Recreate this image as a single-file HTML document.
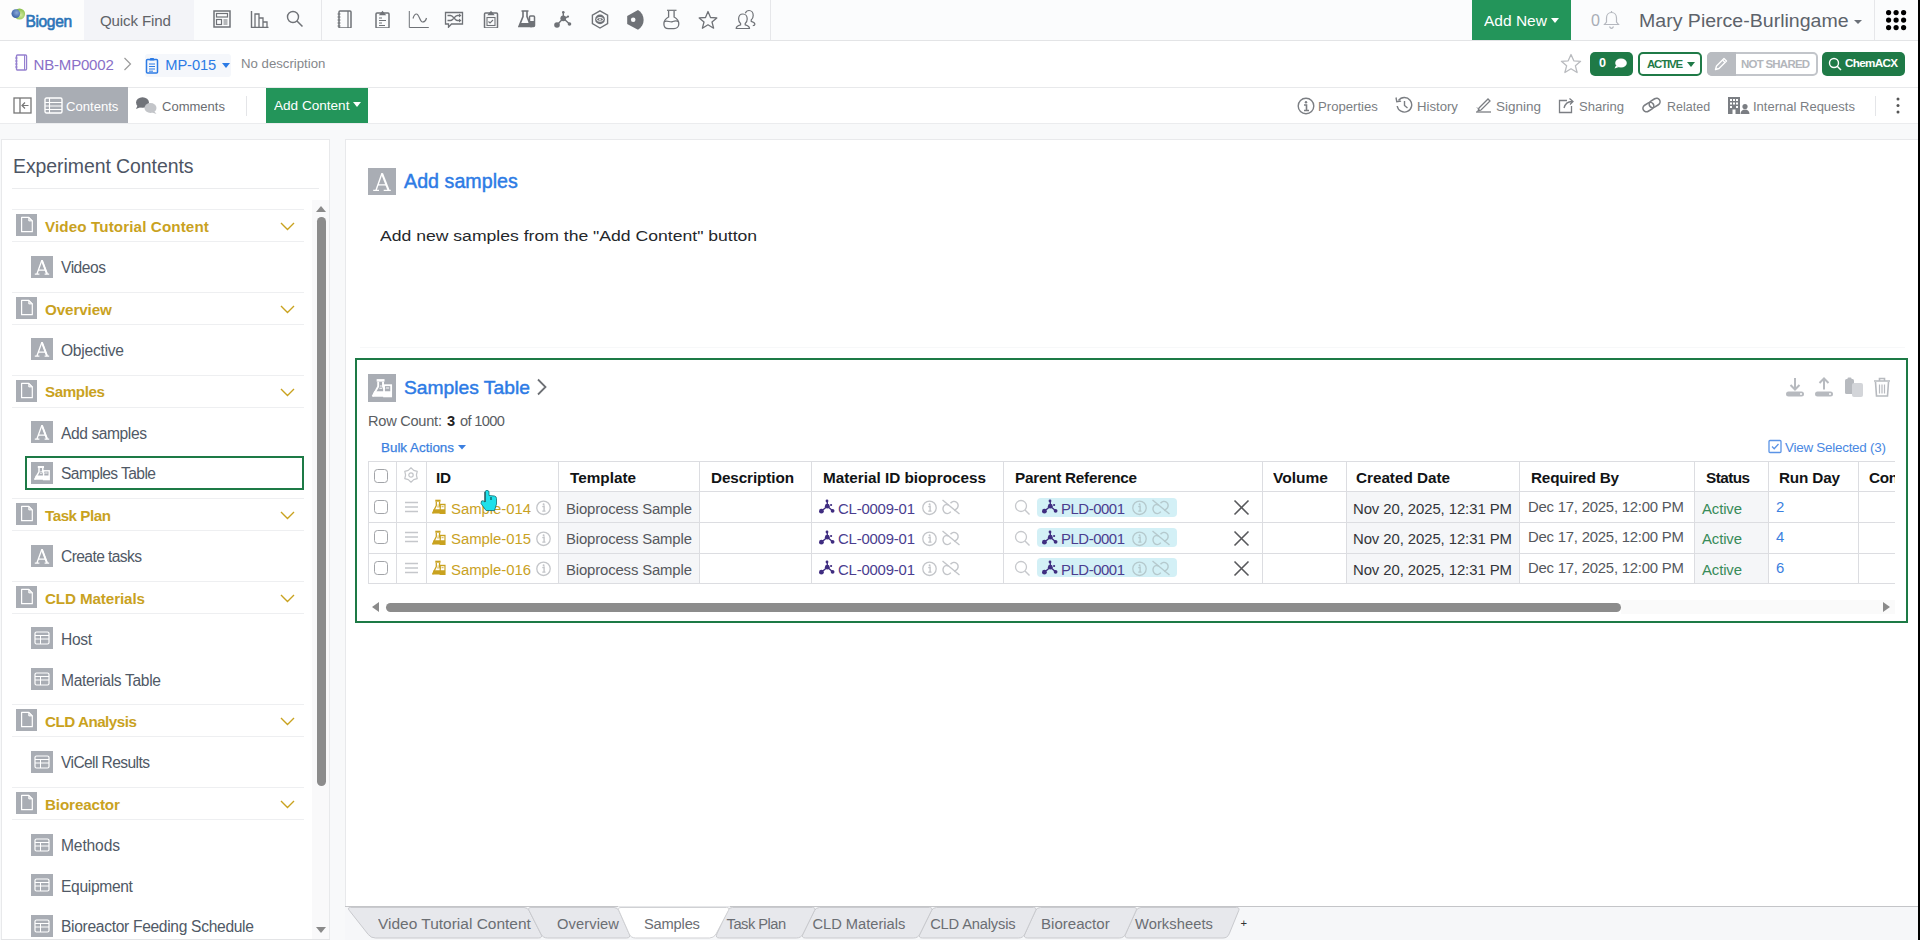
<!DOCTYPE html><html><head><meta charset="utf-8"><style>html,body{margin:0;padding:0;}body{width:1920px;height:940px;overflow:hidden;position:relative;background:#f8f9fa;font-family:"Liberation Sans",sans-serif;}</style></head><body><div style="position:absolute;left:0px;top:0px;width:1920px;height:40px;background:#fbfcfd;"></div>
<div style="position:absolute;left:0px;top:40px;width:1920px;height:1px;background:#e3e4e6;"></div>
<div style="position:absolute;left:84px;top:0px;width:110px;height:40px;background:#f3f4f8;"></div>
<div style="position:absolute;left:321px;top:0px;width:1px;height:40px;background:#e6e7ea;"></div>
<div style="position:absolute;left:770px;top:0px;width:1px;height:40px;background:#e6e7ea;"></div>
<div style="position:absolute;left:0px;top:41px;width:1920px;height:46px;background:#ffffff;"></div>
<div style="position:absolute;left:0px;top:87px;width:1920px;height:1px;background:#e8e9eb;"></div>
<div style="position:absolute;left:0px;top:88px;width:1920px;height:35px;background:#ffffff;"></div>
<div style="position:absolute;left:0px;top:123px;width:1920px;height:1px;background:#ebecee;"></div>
<div style="position:absolute;left:0px;top:124px;width:1920px;height:816px;background:#f8f9fa;"></div>
<div style="position:absolute;left:1918px;top:0px;width:2px;height:940px;background:#000;"></div>
<div style="position:absolute;left:0px;top:0px;width:84px;height:40px;background:#fdfdfd;"></div>
<svg style="position:absolute;left:10px;top:7px;" width="16" height="15" viewBox="0 0 16 15"><defs><radialGradient id="lgg" cx="0.6" cy="0.6" r="0.6"><stop offset="0" stop-color="#d2e8a0"/><stop offset="1" stop-color="#86bd45"/></radialGradient><radialGradient id="lgb" cx="0.6" cy="0.4" r="0.7"><stop offset="0" stop-color="#8aa8d8"/><stop offset="1" stop-color="#2f58a0"/></radialGradient></defs><circle cx="9.5" cy="7" r="5.6" fill="url(#lgg)"/><circle cx="5.8" cy="6.6" r="4.3" fill="url(#lgb)"/></svg>
<div style="position:absolute;left:25.50px;top:13.62px;font-family:'Liberation Sans', sans-serif;font-size:15.57px;line-height:15.57px;font-weight:400;color:#2a74b8;letter-spacing:-0.380px;white-space:nowrap;-webkit-text-stroke:0.6px #2a74b8;">Biogen</div>
<div style="position:absolute;left:100.00px;top:13.09px;font-family:'Liberation Sans', sans-serif;font-size:15.13px;line-height:15.13px;font-weight:400;color:#606368;letter-spacing:-0.156px;white-space:nowrap;">Quick Find</div>
<svg style="position:absolute;left:213px;top:10px;" width="18" height="18" viewBox="0 0 18 18"><rect x="1" y="1" width="16" height="16" fill="none" stroke="#6f7277" stroke-width="1.5"/><rect x="3.5" y="3.5" width="11" height="3.5" fill="none" stroke="#6f7277" stroke-width="1.2"/><rect x="3.5" y="9.5" width="5" height="5" fill="none" stroke="#6f7277" stroke-width="1.2"/><path d="M10.5 10h4M10.5 12h4M10.5 14h4" stroke="#6f7277" stroke-width="1"/></svg>
<svg style="position:absolute;left:250px;top:10px;" width="19" height="18" viewBox="0 0 19 18"><path d="M1.5 1v16.5h17" fill="none" stroke="#6f7277" stroke-width="1.4"/><path d="M5 17V4h4v13M9 17V8h4v9M13 17v-5h4v5" fill="none" stroke="#6f7277" stroke-width="1.3"/></svg>
<svg style="position:absolute;left:286px;top:10px;" width="18" height="18" viewBox="0 0 18 18"><circle cx="7" cy="7" r="5.5" fill="none" stroke="#6f7277" stroke-width="1.4"/><path d="M11 11l5.5 5.5" stroke="#6f7277" stroke-width="1.5"/></svg>
<svg style="position:absolute;left:336px;top:10px;" width="18" height="18" viewBox="0 0 18 18"><rect x="3" y="1" width="12" height="17" rx="1" fill="none" stroke="#6f7277" stroke-width="1.5"/><path d="M12 1v17" stroke="#6f7277" stroke-width="1.2"/><path d="M1.5 4h3M1.5 7h3M1.5 10h3M1.5 13h3M1.5 16h3" stroke="#6f7277" stroke-width="1"/></svg>
<svg style="position:absolute;left:374px;top:10px;" width="17" height="18" viewBox="0 0 17 18"><rect x="2" y="3" width="13" height="15" rx="1" fill="none" stroke="#6f7277" stroke-width="1.5"/><path d="M4.8 5.2h7.4L8.5 .8z" fill="#6f7277"/><path d="M5 8h3M5 10.5h7M5 13h3M5 15.5h6" stroke="#6f7277" stroke-width="1.1"/></svg>
<svg style="position:absolute;left:408px;top:10px;" width="21" height="18" viewBox="0 0 21 18"><path d="M1.3 1v16.5h19.5" fill="none" stroke="#6f7277" stroke-width="1"/><path d="M5 8.5C6 5 7.5 4 8.5 4C11 4 12 12 14.5 12C16.5 12 18 10 18.5 8" fill="none" stroke="#6f7277" stroke-width="1.2"/></svg>
<svg style="position:absolute;left:444px;top:10px;" width="20" height="18" viewBox="0 0 20 18"><path d="M1.5 2.5h17v11.5h-11l-3 3.2v-3.2h-3z" fill="none" stroke="#6f7277" stroke-width="1.3"/><path d="M3.5 5.5h3c3 0 4 5 7 5h2.5M3.5 10.5h3c3 0 4-5 7-5h2.5" fill="none" stroke="#6f7277" stroke-width="1.3"/><path d="M15 3.5l2.5 2-2.5 2M15 8.5l2.5 2-2.5 2" fill="#6f7277"/></svg>
<svg style="position:absolute;left:483px;top:10px;" width="16" height="18" viewBox="0 0 16 18"><rect x="1.5" y="3" width="13" height="15" rx="1" fill="none" stroke="#6f7277" stroke-width="1.5"/><path d="M4.3 5.2h7.4L8 .8z" fill="#6f7277"/><rect x="4" y="7.5" width="8" height="8" fill="none" stroke="#6f7277" stroke-width="1.1"/><path d="M5.5 11.5l1.5 1.5 3-3" fill="none" stroke="#6f7277" stroke-width="1.1"/></svg>
<svg style="position:absolute;left:518px;top:10px;" width="18" height="18" viewBox="0 0 18 18"><path d="M3.5 1h7M5 1.5v5L1 16.5h12l-4-10v-5" fill="none" stroke="#6f7277" stroke-width="1.6"/><path d="M2.5 13h10l1.5 3.5h-13z" fill="#6f7277"/><rect x="11.5" y="6" width="5" height="10.5" rx="1" fill="none" stroke="#6f7277" stroke-width="1.5"/><rect x="11.5" y="11" width="5" height="5.5" fill="#6f7277"/></svg>
<svg style="position:absolute;left:554px;top:10px;" width="18" height="18" viewBox="0 0 18 18"><path d="M3 15L9.3 8.3 15.5 14M9.3 8.3V2.2M9.3 8.3l4.3-1.5" stroke="#6f7277" stroke-width="1.4" fill="none"/><circle cx="9.3" cy="8.3" r="2.9" fill="#6f7277"/><circle cx="3" cy="15" r="2.8" fill="#6f7277"/><circle cx="15.5" cy="14" r="1.8" fill="#6f7277"/><circle cx="9.3" cy="2.2" r="1.3" fill="#6f7277"/><circle cx="14" cy="6.6" r="1.1" fill="#6f7277"/></svg>
<svg style="position:absolute;left:591px;top:10px;" width="18" height="19" viewBox="0 0 18 19"><path d="M9 .8l7.6 4.3v8.6L9 18 1.4 13.7V5.1z" fill="none" stroke="#6f7277" stroke-width="1.4"/><circle cx="9" cy="9.4" r="4.9" fill="#6f7277"/><ellipse cx="9" cy="9.4" rx="3.3" ry="1.9" fill="none" stroke="#fafbfc" stroke-width="1"/><circle cx="9" cy="9.4" r=".9" fill="#fbfcfd"/></svg>
<svg style="position:absolute;left:626px;top:9px;" width="19" height="22" viewBox="0 0 19 22"><path d="M12 1L1.2 7V15L12 20.8A11.5 11.5 0 0 0 12 1Z" fill="#6f7277"/><circle cx="7.2" cy="10.8" r="2.3" fill="#fbfcfd"/></svg>
<svg style="position:absolute;left:663px;top:9px;" width="17" height="21" viewBox="0 0 17 21"><path d="M4 1.3H13.5" stroke="#6f7277" stroke-width="1.2"/><path d="M5.6 2V8C2.3 9.6 .9 12.3 .9 15C.9 17.8 2.9 19.6 5.5 19.6H11C13.6 19.6 15.8 17.8 15.8 15C15.8 12.3 14.4 9.6 11.1 8V2" fill="none" stroke="#6f7277" stroke-width="1.3"/><path d="M1.1 12.8C4 10.9 7 13.6 9.6 12.6S13.6 11 15.6 12.8" fill="none" stroke="#6f7277" stroke-width="1.2"/></svg>
<svg style="position:absolute;left:698px;top:10px;" width="20" height="20" viewBox="0 0 20 20"><path d="M10 1.5l2.5 6 6.3.4-4.8 4.1 1.6 6.2L10 14.8l-5.6 3.4L6 12 1.2 7.9l6.3-.4z" fill="none" stroke="#6f7277" stroke-width="1.3" stroke-linejoin="round"/></svg>
<svg style="position:absolute;left:735px;top:9px;" width="21" height="21" viewBox="0 0 21 21"><path d="M8 5C5.3 5 3.6 7.2 3.6 10C3.6 12 4.4 13.6 5.6 14.5V15.8C3.2 16.4 1.2 17.3 1.2 19.5H14.5C14.5 17.3 12.5 16.4 10.2 15.8V14.5C11.4 13.6 12.2 12 12.2 10C12.2 7.2 10.5 5 8 5Z" fill="none" stroke="#6f7277" stroke-width="1.2"/><path d="M10.3 4.2C11 2.5 12.3 1.5 14 1.5C16.5 1.5 18.2 3.7 18.2 6.5C18.2 8.5 17.4 10.1 16.2 11V12.3C18.3 12.9 19.9 13.7 19.9 15.3C19.9 16.3 19.2 16.6 17.8 16.6" fill="none" stroke="#6f7277" stroke-width="1.2"/></svg>
<div style="position:absolute;left:1472px;top:0px;width:99px;height:40px;background:#23955a;"></div>
<div style="position:absolute;left:1484.00px;top:13.02px;font-family:'Liberation Sans', sans-serif;font-size:15.21px;line-height:15.21px;font-weight:400;color:#ffffff;letter-spacing:0.000px;white-space:nowrap;transform:scaleX(1.0202);transform-origin:0 0;">Add New</div>
<svg style="position:absolute;left:1551px;top:18px;" width="8" height="5" viewBox="0 0 8 5"><path d="M0 0h8L4 5z" fill="#fff"/></svg>
<div style="position:absolute;left:1591.00px;top:11.97px;font-family:'Liberation Sans', sans-serif;font-size:16.11px;line-height:16.11px;font-weight:400;color:#a9adb6;letter-spacing:0.000px;white-space:nowrap;">0</div>
<svg style="position:absolute;left:1603px;top:10px;" width="17" height="19" viewBox="0 0 17 19"><path d="M8.5 2.5c3 0 5 2.3 5 5.5v4l2 2.5H1.5l2-2.5v-4c0-3.2 2-5.5 5-5.5z" fill="none" stroke="#b5b8bf" stroke-width="1.2"/><path d="M6.5 16.5c.5 1.2 1.2 1.8 2 1.8s1.5-.6 2-1.8" fill="none" stroke="#b5b8bf" stroke-width="1.2"/><path d="M8.5 1v1.5" stroke="#b5b8bf" stroke-width="1.2"/></svg>
<div style="position:absolute;left:1639.00px;top:12.25px;font-family:'Liberation Sans', sans-serif;font-size:18.13px;line-height:18.13px;font-weight:400;color:#5d636b;letter-spacing:0.000px;white-space:nowrap;transform:scaleX(1.0789);transform-origin:0 0;">Mary Pierce-Burlingame</div>
<svg style="position:absolute;left:1854px;top:20px;" width="8" height="4" viewBox="0 0 8 4"><path d="M0 0h8L4 4z" fill="#6b7078"/></svg>
<div style="position:absolute;left:1874px;top:0px;width:1px;height:40px;background:#e6e7ea;"></div>
<svg style="position:absolute;left:1886px;top:10px;" width="21" height="21" viewBox="0 0 21 21"><circle cx="2.6" cy="2.6" r="2.6" fill="#000"/><circle cx="10.1" cy="2.6" r="2.6" fill="#000"/><circle cx="17.6" cy="2.6" r="2.6" fill="#000"/><circle cx="2.6" cy="10.1" r="2.6" fill="#000"/><circle cx="10.1" cy="10.1" r="2.6" fill="#000"/><circle cx="17.6" cy="10.1" r="2.6" fill="#000"/><circle cx="2.6" cy="17.6" r="2.6" fill="#000"/><circle cx="10.1" cy="17.6" r="2.6" fill="#000"/><circle cx="17.6" cy="17.6" r="2.6" fill="#000"/></svg>
<svg style="position:absolute;left:14px;top:54px;" width="14" height="17" viewBox="0 0 14 17"><rect x="2.5" y="1" width="10" height="15" rx="1" fill="none" stroke="#9580cf" stroke-width="1.4"/><path d="M1 4h2.5M1 7h2.5M1 10h2.5M1 13h2.5" stroke="#9580cf" stroke-width="1"/><path d="M10.5 1v15" stroke="#9580cf" stroke-width="1"/></svg>
<div style="position:absolute;left:33.60px;top:57.15px;font-family:'Liberation Sans', sans-serif;font-size:15.06px;line-height:15.06px;font-weight:400;color:#8a70c8;letter-spacing:-0.225px;white-space:nowrap;">NB-MP0002</div>
<svg style="position:absolute;left:123px;top:57px;" width="9" height="14" viewBox="0 0 9 14"><path d="M1.5 1l6 6-6 6" fill="none" stroke="#9b9b9b" stroke-width="1.2"/></svg>
<div style="position:absolute;left:145px;top:54px;width:86px;height:23px;background:#f5f7fb;border-radius:3px;"></div>
<svg style="position:absolute;left:145px;top:57px;" width="14" height="17" viewBox="0 0 14 17"><rect x="1.5" y="2.5" width="11" height="13.5" rx="1" fill="none" stroke="#2c7be5" stroke-width="1.5"/><path d="M4.5 3.5h5l-.8-2.5h-3.4z" fill="#2c7be5"/><path d="M4 7h6M4 9.5h6M4 12h6M4 14.2h4" stroke="#2c7be5" stroke-width="1"/></svg>
<div style="position:absolute;left:165.30px;top:58.37px;font-family:'Liberation Sans', sans-serif;font-size:14.69px;line-height:14.69px;font-weight:400;color:#2c7be5;letter-spacing:-0.110px;white-space:nowrap;">MP-015</div>
<svg style="position:absolute;left:222px;top:63px;" width="8" height="5" viewBox="0 0 8 5"><path d="M0 0h8L4 5z" fill="#2c7be5"/></svg>
<div style="position:absolute;left:241.40px;top:58.41px;font-family:'Liberation Sans', sans-serif;font-size:12.28px;line-height:12.28px;font-weight:400;color:#85878b;letter-spacing:0.000px;white-space:nowrap;transform:scaleX(1.0763);transform-origin:0 0;">No description</div>
<svg style="position:absolute;left:1560px;top:53px;" width="22" height="21" viewBox="0 0 22 21"><path d="M11 1.5l2.8 6.3 6.8.5-5.2 4.5 1.7 6.7L11 15.8l-6.1 3.7 1.7-6.7L1.4 8.3l6.8-.5z" fill="none" stroke="#b9bbbf" stroke-width="1.3" stroke-linejoin="round"/></svg>
<div style="position:absolute;left:1590px;top:52px;width:43px;height:24px;background:#1f7a47;border-radius:5px;"></div>
<div style="position:absolute;left:1599.00px;top:56.83px;font-family:'Liberation Sans', sans-serif;font-size:12.61px;line-height:12.61px;font-weight:700;color:#fff;letter-spacing:0.000px;white-space:nowrap;">0</div>
<svg style="position:absolute;left:1614px;top:58px;" width="13" height="11" viewBox="0 0 13 11"><ellipse cx="7" cy="5" rx="5.8" ry="4.6" fill="#fff"/><path d="M2 7.5L.5 10.5 5 9z" fill="#fff"/></svg>
<div style="position:absolute;left:1638px;top:52px;width:64px;height:24px;background:#fff;border:2px solid #1f7a47;border-radius:5px;box-sizing:border-box;"></div>
<div style="position:absolute;left:1647.00px;top:58.84px;font-family:'Liberation Sans', sans-serif;font-size:11.41px;line-height:11.41px;font-weight:700;color:#1f7a47;letter-spacing:-1.160px;white-space:nowrap;">ACTIVE</div>
<svg style="position:absolute;left:1687px;top:62px;" width="8" height="5" viewBox="0 0 8 5"><path d="M0 0h8L4 5z" fill="#1f7a47"/></svg>
<div style="position:absolute;left:1707px;top:52px;width:111px;height:24px;background:#fff;border:2px solid #c2c5ca;border-radius:5px;box-sizing:border-box;"></div>
<div style="position:absolute;left:1707px;top:52px;width:29px;height:24px;background:#b9bcc1;border-radius:5px 0 0 5px;"></div>
<svg style="position:absolute;left:1713px;top:57px;" width="16" height="15" viewBox="0 0 16 15"><path d="M2.5 12.5l1-3.5L11 1.5l2.5 2.5L6 11.5z" fill="none" stroke="#fff" stroke-width="1.4" stroke-linejoin="round"/><path d="M9.5 3l2.5 2.5" stroke="#fff" stroke-width="1.2"/></svg>
<div style="position:absolute;left:1741.00px;top:58.79px;font-family:'Liberation Sans', sans-serif;font-size:11.47px;line-height:11.47px;font-weight:700;color:#b3b6bb;letter-spacing:-0.744px;white-space:nowrap;">NOT SHARED</div>
<div style="position:absolute;left:1822px;top:52px;width:83px;height:24px;background:#1f7a47;border-radius:5px;"></div>
<svg style="position:absolute;left:1828px;top:57px;" width="14" height="14" viewBox="0 0 14 14"><circle cx="6" cy="6" r="4.5" fill="none" stroke="#fff" stroke-width="1.4"/><path d="M9.2 9.2l3.8 3.8" stroke="#fff" stroke-width="1.5"/></svg>
<div style="position:absolute;left:1845.00px;top:57.10px;font-family:'Liberation Sans', sans-serif;font-size:11.69px;line-height:11.69px;font-weight:700;color:#fff;letter-spacing:-0.700px;white-space:nowrap;">ChemACX</div>
<svg style="position:absolute;left:13px;top:97px;" width="19" height="17" viewBox="0 0 19 17"><rect x="1" y="1" width="17" height="15" fill="none" stroke="#777" stroke-width="1.3"/><path d="M7 1v15" stroke="#777" stroke-width="1.3"/><path d="M15.5 8.5h-6M12 5.5l-3 3 3 3" fill="none" stroke="#777" stroke-width="1.2"/></svg>
<div style="position:absolute;left:36px;top:87px;width:92px;height:36px;background:#a9adb4;"></div>
<svg style="position:absolute;left:44px;top:97px;" width="19" height="17" viewBox="0 0 19 17"><rect x="1" y="1" width="17" height="15" rx="1.5" fill="none" stroke="#fff" stroke-width="1.4"/><path d="M1 5.5h17M1 9h17M1 12.5h17M5.5 1v15" stroke="#fff" stroke-width="1.1"/></svg>
<div style="position:absolute;left:66.00px;top:100.82px;font-family:'Liberation Sans', sans-serif;font-size:12.73px;line-height:12.73px;font-weight:400;color:#ffffff;letter-spacing:0.000px;white-space:nowrap;transform:scaleX(1.0284);transform-origin:0 0;">Contents</div>
<svg style="position:absolute;left:135px;top:96px;" width="23" height="19" viewBox="0 0 23 19"><ellipse cx="7.5" cy="6.5" rx="6.5" ry="5.3" fill="#707379"/><path d="M2.5 9.5L1 13l5-2z" fill="#707379"/><ellipse cx="15.5" cy="12" rx="6" ry="5" fill="#c3c5c9"/><path d="M19 15l2.5 3-4.5-1.5z" fill="#c3c5c9"/></svg>
<div style="position:absolute;left:162.00px;top:100.81px;font-family:'Liberation Sans', sans-serif;font-size:12.50px;line-height:12.50px;font-weight:400;color:#6a6d72;letter-spacing:0.000px;white-space:nowrap;transform:scaleX(1.0422);transform-origin:0 0;">Comments</div>
<div style="position:absolute;left:246px;top:96px;width:1px;height:20px;background:#e4e5e8;"></div>
<div style="position:absolute;left:266px;top:88px;width:102px;height:35px;background:#23955a;"></div>
<div style="position:absolute;left:274.20px;top:99.84px;font-family:'Liberation Sans', sans-serif;font-size:12.95px;line-height:12.95px;font-weight:400;color:#ffffff;letter-spacing:0.000px;white-space:nowrap;transform:scaleX(1.0486);transform-origin:0 0;">Add Content</div>
<svg style="position:absolute;left:353px;top:102px;" width="8" height="5" viewBox="0 0 8 5"><path d="M0 0h8L4 5z" fill="#fff"/></svg>
<svg style="position:absolute;left:1297px;top:97px;" width="18" height="18" viewBox="0 0 18 18"><circle cx="9" cy="9" r="7.8" fill="none" stroke="#7b7e83" stroke-width="1.4"/><circle cx="9" cy="5.2" r="1.2" fill="#7b7e83"/><path d="M7 8h2.5v5.5M7 13.5h5" fill="none" stroke="#7b7e83" stroke-width="1.6"/></svg>
<div style="position:absolute;left:1318.00px;top:100.60px;font-family:'Liberation Sans', sans-serif;font-size:12.64px;line-height:12.64px;font-weight:400;color:#7b7e83;letter-spacing:0.000px;white-space:nowrap;transform:scaleX(1.0408);transform-origin:0 0;">Properties</div>
<svg style="position:absolute;left:1395px;top:96px;" width="18" height="18" viewBox="0 0 18 18"><path d="M3.5 4.5A7.3 7.3 0 1 1 2.2 10" fill="none" stroke="#7b7e83" stroke-width="1.4"/><path d="M1 1.5l.8 4.3 4.3-.7" fill="none" stroke="#7b7e83" stroke-width="1.4"/><path d="M9.5 5v4.5l3 2.5" fill="none" stroke="#7b7e83" stroke-width="1.4"/></svg>
<div style="position:absolute;left:1417.00px;top:100.60px;font-family:'Liberation Sans', sans-serif;font-size:12.64px;line-height:12.64px;font-weight:400;color:#7b7e83;letter-spacing:0.000px;white-space:nowrap;transform:scaleX(1.0419);transform-origin:0 0;">History</div>
<svg style="position:absolute;left:1475px;top:97px;" width="17" height="16" viewBox="0 0 17 16"><path d="M4 11L13 2l2 2-9 9-3 1z" fill="none" stroke="#7b7e83" stroke-width="1.3"/><path d="M1 15h15" stroke="#7b7e83" stroke-width="1.3"/><path d="M2 10.5l3 3" stroke="#7b7e83" stroke-width="1"/></svg>
<div style="position:absolute;left:1496.00px;top:100.54px;font-family:'Liberation Sans', sans-serif;font-size:12.71px;line-height:12.71px;font-weight:400;color:#7b7e83;letter-spacing:0.000px;white-space:nowrap;transform:scaleX(1.0626);transform-origin:0 0;">Signing</div>
<svg style="position:absolute;left:1558px;top:97px;" width="17" height="17" viewBox="0 0 17 17"><path d="M9 3.5H1.5v12h12V9" fill="none" stroke="#7b7e83" stroke-width="1.3"/><path d="M6 11c1-4 4-6.5 8-6.5M11.5 1.5l3.5 3-3 3" fill="none" stroke="#7b7e83" stroke-width="1.3"/></svg>
<div style="position:absolute;left:1579.00px;top:100.62px;font-family:'Liberation Sans', sans-serif;font-size:12.61px;line-height:12.61px;font-weight:400;color:#7b7e83;letter-spacing:0.000px;white-space:nowrap;transform:scaleX(1.0357);transform-origin:0 0;">Sharing</div>
<svg style="position:absolute;left:1641px;top:97px;" width="21" height="16" viewBox="0 0 21 16"><g transform="rotate(-32 10.5 8)" fill="none" stroke="#7b7e83" stroke-width="1.6"><rect x="1" y="4.6" width="11.5" height="7" rx="3.5"/><rect x="8.5" y="4.4" width="11.5" height="7" rx="3.5"/></g></svg>
<div style="position:absolute;left:1667.00px;top:100.74px;font-family:'Liberation Sans', sans-serif;font-size:12.47px;line-height:12.47px;font-weight:400;color:#7b7e83;letter-spacing:0.017px;white-space:nowrap;">Related</div>
<svg style="position:absolute;left:1728px;top:97px;" width="22" height="17" viewBox="0 0 22 17"><path d="M0 0h12v17H0z" fill="#7b7e83"/><g fill="#fff"><rect x="2" y="2" width="2" height="2"/><rect x="5" y="2" width="2" height="2"/><rect x="8" y="2" width="2" height="2"/><rect x="2" y="5.5" width="2" height="2"/><rect x="5" y="5.5" width="2" height="2"/><rect x="8" y="5.5" width="2" height="2"/><rect x="2" y="9" width="2" height="2"/><rect x="8" y="9" width="2" height="2"/></g><rect x="4.5" y="12.5" width="3" height="4.5" fill="#fff"/><circle cx="17" cy="9.5" r="2.6" fill="#7b7e83"/><path d="M12.5 17c0-3 2-4.5 4.5-4.5s4.5 1.5 4.5 4.5z" fill="#7b7e83"/></svg>
<div style="position:absolute;left:1753.00px;top:100.63px;font-family:'Liberation Sans', sans-serif;font-size:12.60px;line-height:12.60px;font-weight:400;color:#7b7e83;letter-spacing:0.000px;white-space:nowrap;transform:scaleX(1.0329);transform-origin:0 0;">Internal Requests</div>
<div style="position:absolute;left:1875px;top:96px;width:1px;height:20px;background:#e4e5e8;"></div>
<svg style="position:absolute;left:1896px;top:97px;" width="4" height="17" viewBox="0 0 4 17"><circle cx="2" cy="2" r="1.5" fill="#555"/><circle cx="2" cy="8.5" r="1.5" fill="#555"/><circle cx="2" cy="15" r="1.5" fill="#555"/></svg>
<div style="position:absolute;left:1px;top:139px;width:329px;height:801px;background:#ffffff;border:1px solid #e8e9eb;border-bottom:none;box-sizing:border-box;"></div>
<div style="position:absolute;left:13.00px;top:156.92px;font-family:'Liberation Sans', sans-serif;font-size:19.47px;line-height:19.47px;font-weight:400;color:#4d5564;letter-spacing:-0.061px;white-space:nowrap;">Experiment Contents</div>
<div style="position:absolute;left:12px;top:188px;width:307px;height:1px;background:#ebecee;"></div>
<div style="position:absolute;left:312px;top:200px;width:17px;height:740px;background:#f9f9fa;"></div>
<svg style="position:absolute;left:316px;top:206px;" width="10" height="6" viewBox="0 0 10 6"><path d="M0 6L5 0l5 6z" fill="#8a8a8a"/></svg>
<div style="position:absolute;left:317px;top:217px;width:9px;height:569px;background:#8c8c8c;border-radius:5px;"></div>
<svg style="position:absolute;left:316px;top:927px;" width="10" height="6" viewBox="0 0 10 6"><path d="M0 0h10L5 6z" fill="#8a8a8a"/></svg>
<div style="position:absolute;left:0;top:0;width:312px;height:939px;overflow:hidden;">
<div style="position:absolute;left:12px;top:209px;width:292px;height:1px;background:#eeeff1;"></div>
<div style="position:absolute;left:16px;top:214px;width:21px;height:22px;background:#a9adb4;"></div>
<svg style="position:absolute;left:16px;top:214px;" width="21" height="22" viewBox="0 0 21 22"><path d="M5.6 3.4h7.2l3.5 3.5v10.8H5.6z" fill="none" stroke="#fff" stroke-width="1.2" stroke-linejoin="round"/><path d="M12.8 3.4v3.5h3.5z" fill="#fff" fill-opacity=".5" stroke="#fff" stroke-width="1"/></svg>
<div style="position:absolute;left:45.00px;top:218.73px;font-family:'Liberation Sans', sans-serif;font-size:15.20px;line-height:15.20px;font-weight:700;color:#c9a21f;letter-spacing:0.117px;white-space:nowrap;">Video Tutorial Content</div>
<svg style="position:absolute;left:280px;top:222px;" width="15" height="9" viewBox="0 0 15 9"><path d="M1 1l6.5 6.5L14 1" fill="none" stroke="#c9a21f" stroke-width="1.4"/></svg>
<div style="position:absolute;left:12px;top:241px;width:292px;height:1px;background:#eeeff1;"></div>
<div style="position:absolute;left:31px;top:256px;width:22px;height:22px;background:#a9adb4;"></div>
<svg style="position:absolute;left:31px;top:256px;" width="22" height="22" viewBox="0 0 22 22"><path d="M6 17.8L10.9 4.3M10.9 4.3L16 17.8M7.6 14.2h6.8M3.8 18.1h4.6M13.6 18.1h4.6" fill="none" stroke="#fff" stroke-width="1.3"/><path d="M10.9 4.3L16 17.8" stroke="#fff" stroke-width="1.9"/></svg>
<div style="position:absolute;left:61.00px;top:260.22px;font-family:'Liberation Sans', sans-serif;font-size:15.60px;line-height:15.60px;font-weight:400;color:#505966;letter-spacing:-0.480px;white-space:nowrap;">Videos</div>
<div style="position:absolute;left:12px;top:292px;width:292px;height:1px;background:#eeeff1;"></div>
<div style="position:absolute;left:16px;top:297px;width:21px;height:22px;background:#a9adb4;"></div>
<svg style="position:absolute;left:16px;top:297px;" width="21" height="22" viewBox="0 0 21 22"><path d="M5.6 3.4h7.2l3.5 3.5v10.8H5.6z" fill="none" stroke="#fff" stroke-width="1.2" stroke-linejoin="round"/><path d="M12.8 3.4v3.5h3.5z" fill="#fff" fill-opacity=".5" stroke="#fff" stroke-width="1"/></svg>
<div style="position:absolute;left:45.00px;top:301.58px;font-family:'Liberation Sans', sans-serif;font-size:15.20px;line-height:15.20px;font-weight:700;color:#c9a21f;letter-spacing:-0.100px;white-space:nowrap;">Overview</div>
<svg style="position:absolute;left:280px;top:305px;" width="15" height="9" viewBox="0 0 15 9"><path d="M1 1l6.5 6.5L14 1" fill="none" stroke="#c9a21f" stroke-width="1.4"/></svg>
<div style="position:absolute;left:12px;top:324px;width:292px;height:1px;background:#eeeff1;"></div>
<div style="position:absolute;left:31px;top:338px;width:22px;height:22px;background:#a9adb4;"></div>
<svg style="position:absolute;left:31px;top:338px;" width="22" height="22" viewBox="0 0 22 22"><path d="M6 17.8L10.9 4.3M10.9 4.3L16 17.8M7.6 14.2h6.8M3.8 18.1h4.6M13.6 18.1h4.6" fill="none" stroke="#fff" stroke-width="1.3"/><path d="M10.9 4.3L16 17.8" stroke="#fff" stroke-width="1.9"/></svg>
<div style="position:absolute;left:61.00px;top:343.07px;font-family:'Liberation Sans', sans-serif;font-size:15.60px;line-height:15.60px;font-weight:400;color:#505966;letter-spacing:-0.256px;white-space:nowrap;">Objective</div>
<div style="position:absolute;left:12px;top:375px;width:292px;height:1px;background:#eeeff1;"></div>
<div style="position:absolute;left:16px;top:380px;width:21px;height:22px;background:#a9adb4;"></div>
<svg style="position:absolute;left:16px;top:380px;" width="21" height="22" viewBox="0 0 21 22"><path d="M5.6 3.4h7.2l3.5 3.5v10.8H5.6z" fill="none" stroke="#fff" stroke-width="1.2" stroke-linejoin="round"/><path d="M12.8 3.4v3.5h3.5z" fill="#fff" fill-opacity=".5" stroke="#fff" stroke-width="1"/></svg>
<div style="position:absolute;left:45.00px;top:384.43px;font-family:'Liberation Sans', sans-serif;font-size:15.20px;line-height:15.20px;font-weight:700;color:#c9a21f;letter-spacing:-0.417px;white-space:nowrap;">Samples</div>
<svg style="position:absolute;left:280px;top:388px;" width="15" height="9" viewBox="0 0 15 9"><path d="M1 1l6.5 6.5L14 1" fill="none" stroke="#c9a21f" stroke-width="1.4"/></svg>
<div style="position:absolute;left:12px;top:407px;width:292px;height:1px;background:#eeeff1;"></div>
<div style="position:absolute;left:31px;top:421px;width:22px;height:22px;background:#a9adb4;"></div>
<svg style="position:absolute;left:31px;top:421px;" width="22" height="22" viewBox="0 0 22 22"><path d="M6 17.8L10.9 4.3M10.9 4.3L16 17.8M7.6 14.2h6.8M3.8 18.1h4.6M13.6 18.1h4.6" fill="none" stroke="#fff" stroke-width="1.3"/><path d="M10.9 4.3L16 17.8" stroke="#fff" stroke-width="1.9"/></svg>
<div style="position:absolute;left:61.00px;top:425.92px;font-family:'Liberation Sans', sans-serif;font-size:15.60px;line-height:15.60px;font-weight:400;color:#505966;letter-spacing:-0.420px;white-space:nowrap;">Add samples</div>
<div style="position:absolute;left:31px;top:462px;width:22px;height:22px;background:#a9adb4;"></div>
<svg style="position:absolute;left:31px;top:462px;" width="22" height="22" viewBox="0 0 22 22"><g transform="scale(1.0000)"><path d="M6.8 4h6.2v2H6.8z" fill="#fff"/><path d="M8 6v3.8L3.6 17.6M11.8 6v3.8l1.2 2.2" fill="none" stroke="#fff" stroke-width="1.5"/><rect x="12.6" y="8.8" width="5.6" height="8.8" fill="none" stroke="#fff" stroke-width="1.4"/><path d="M4.8 13.6h13.4v4.2H3.4z" fill="#fff"/><path d="M9 11.2h2.2M9.4 9.4h1.4M14.2 11h2.4" stroke="#fff" stroke-width=".9"/></g></svg>
<div style="position:absolute;left:61.00px;top:466.37px;font-family:'Liberation Sans', sans-serif;font-size:15.60px;line-height:15.60px;font-weight:400;color:#505966;letter-spacing:-0.587px;white-space:nowrap;">Samples Table</div>
<div style="position:absolute;left:25px;top:456px;width:279px;height:34px;background:transparent;border:2px solid #1d7a46;box-sizing:border-box;"></div>
<div style="position:absolute;left:12px;top:498px;width:292px;height:1px;background:#eeeff1;"></div>
<div style="position:absolute;left:16px;top:503px;width:21px;height:22px;background:#a9adb4;"></div>
<svg style="position:absolute;left:16px;top:503px;" width="21" height="22" viewBox="0 0 21 22"><path d="M5.6 3.4h7.2l3.5 3.5v10.8H5.6z" fill="none" stroke="#fff" stroke-width="1.2" stroke-linejoin="round"/><path d="M12.8 3.4v3.5h3.5z" fill="#fff" fill-opacity=".5" stroke="#fff" stroke-width="1"/></svg>
<div style="position:absolute;left:45.00px;top:507.73px;font-family:'Liberation Sans', sans-serif;font-size:15.20px;line-height:15.20px;font-weight:700;color:#c9a21f;letter-spacing:-0.481px;white-space:nowrap;">Task Plan</div>
<svg style="position:absolute;left:280px;top:511px;" width="15" height="9" viewBox="0 0 15 9"><path d="M1 1l6.5 6.5L14 1" fill="none" stroke="#c9a21f" stroke-width="1.4"/></svg>
<div style="position:absolute;left:12px;top:530px;width:292px;height:1px;background:#eeeff1;"></div>
<div style="position:absolute;left:31px;top:545px;width:22px;height:22px;background:#a9adb4;"></div>
<svg style="position:absolute;left:31px;top:545px;" width="22" height="22" viewBox="0 0 22 22"><path d="M6 17.8L10.9 4.3M10.9 4.3L16 17.8M7.6 14.2h6.8M3.8 18.1h4.6M13.6 18.1h4.6" fill="none" stroke="#fff" stroke-width="1.3"/><path d="M10.9 4.3L16 17.8" stroke="#fff" stroke-width="1.9"/></svg>
<div style="position:absolute;left:61.00px;top:549.22px;font-family:'Liberation Sans', sans-serif;font-size:15.60px;line-height:15.60px;font-weight:400;color:#505966;letter-spacing:-0.595px;white-space:nowrap;">Create tasks</div>
<div style="position:absolute;left:12px;top:581px;width:292px;height:1px;background:#eeeff1;"></div>
<div style="position:absolute;left:16px;top:586px;width:21px;height:22px;background:#a9adb4;"></div>
<svg style="position:absolute;left:16px;top:586px;" width="21" height="22" viewBox="0 0 21 22"><path d="M5.6 3.4h7.2l3.5 3.5v10.8H5.6z" fill="none" stroke="#fff" stroke-width="1.2" stroke-linejoin="round"/><path d="M12.8 3.4v3.5h3.5z" fill="#fff" fill-opacity=".5" stroke="#fff" stroke-width="1"/></svg>
<div style="position:absolute;left:45.00px;top:590.58px;font-family:'Liberation Sans', sans-serif;font-size:15.20px;line-height:15.20px;font-weight:700;color:#c9a21f;letter-spacing:-0.112px;white-space:nowrap;">CLD Materials</div>
<svg style="position:absolute;left:280px;top:594px;" width="15" height="9" viewBox="0 0 15 9"><path d="M1 1l6.5 6.5L14 1" fill="none" stroke="#c9a21f" stroke-width="1.4"/></svg>
<div style="position:absolute;left:12px;top:613px;width:292px;height:1px;background:#eeeff1;"></div>
<div style="position:absolute;left:31px;top:627px;width:22px;height:22px;background:#a9adb4;"></div>
<svg style="position:absolute;left:31px;top:627px;" width="22" height="22" viewBox="0 0 22 22"><rect x="4" y="5" width="14" height="12" rx="1.5" fill="none" stroke="#fff" stroke-width="1.2"/><path d="M4 8.5h14M4 12h14M9.5 8.5V17" stroke="#fff" stroke-width="1"/></svg>
<div style="position:absolute;left:61.00px;top:632.07px;font-family:'Liberation Sans', sans-serif;font-size:15.60px;line-height:15.60px;font-weight:400;color:#505966;letter-spacing:-0.367px;white-space:nowrap;">Host</div>
<div style="position:absolute;left:31px;top:668px;width:22px;height:22px;background:#a9adb4;"></div>
<svg style="position:absolute;left:31px;top:668px;" width="22" height="22" viewBox="0 0 22 22"><rect x="4" y="5" width="14" height="12" rx="1.5" fill="none" stroke="#fff" stroke-width="1.2"/><path d="M4 8.5h14M4 12h14M9.5 8.5V17" stroke="#fff" stroke-width="1"/></svg>
<div style="position:absolute;left:61.00px;top:672.52px;font-family:'Liberation Sans', sans-serif;font-size:15.60px;line-height:15.60px;font-weight:400;color:#505966;letter-spacing:-0.332px;white-space:nowrap;">Materials Table</div>
<div style="position:absolute;left:12px;top:704px;width:292px;height:1px;background:#eeeff1;"></div>
<div style="position:absolute;left:16px;top:709px;width:21px;height:22px;background:#a9adb4;"></div>
<svg style="position:absolute;left:16px;top:709px;" width="21" height="22" viewBox="0 0 21 22"><path d="M5.6 3.4h7.2l3.5 3.5v10.8H5.6z" fill="none" stroke="#fff" stroke-width="1.2" stroke-linejoin="round"/><path d="M12.8 3.4v3.5h3.5z" fill="#fff" fill-opacity=".5" stroke="#fff" stroke-width="1"/></svg>
<div style="position:absolute;left:45.00px;top:713.88px;font-family:'Liberation Sans', sans-serif;font-size:15.20px;line-height:15.20px;font-weight:700;color:#c9a21f;letter-spacing:-0.491px;white-space:nowrap;">CLD Analysis</div>
<svg style="position:absolute;left:280px;top:717px;" width="15" height="9" viewBox="0 0 15 9"><path d="M1 1l6.5 6.5L14 1" fill="none" stroke="#c9a21f" stroke-width="1.4"/></svg>
<div style="position:absolute;left:12px;top:736px;width:292px;height:1px;background:#eeeff1;"></div>
<div style="position:absolute;left:31px;top:751px;width:22px;height:22px;background:#a9adb4;"></div>
<svg style="position:absolute;left:31px;top:751px;" width="22" height="22" viewBox="0 0 22 22"><rect x="4" y="5" width="14" height="12" rx="1.5" fill="none" stroke="#fff" stroke-width="1.2"/><path d="M4 8.5h14M4 12h14M9.5 8.5V17" stroke="#fff" stroke-width="1"/></svg>
<div style="position:absolute;left:61.00px;top:755.37px;font-family:'Liberation Sans', sans-serif;font-size:15.60px;line-height:15.60px;font-weight:400;color:#505966;letter-spacing:-0.600px;white-space:nowrap;">ViCell Results</div>
<div style="position:absolute;left:12px;top:787px;width:292px;height:1px;background:#eeeff1;"></div>
<div style="position:absolute;left:16px;top:792px;width:21px;height:22px;background:#a9adb4;"></div>
<svg style="position:absolute;left:16px;top:792px;" width="21" height="22" viewBox="0 0 21 22"><path d="M5.6 3.4h7.2l3.5 3.5v10.8H5.6z" fill="none" stroke="#fff" stroke-width="1.2" stroke-linejoin="round"/><path d="M12.8 3.4v3.5h3.5z" fill="#fff" fill-opacity=".5" stroke="#fff" stroke-width="1"/></svg>
<div style="position:absolute;left:45.00px;top:796.73px;font-family:'Liberation Sans', sans-serif;font-size:15.20px;line-height:15.20px;font-weight:700;color:#c9a21f;letter-spacing:-0.117px;white-space:nowrap;">Bioreactor</div>
<svg style="position:absolute;left:280px;top:800px;" width="15" height="9" viewBox="0 0 15 9"><path d="M1 1l6.5 6.5L14 1" fill="none" stroke="#c9a21f" stroke-width="1.4"/></svg>
<div style="position:absolute;left:12px;top:819px;width:292px;height:1px;background:#eeeff1;"></div>
<div style="position:absolute;left:31px;top:834px;width:22px;height:22px;background:#a9adb4;"></div>
<svg style="position:absolute;left:31px;top:834px;" width="22" height="22" viewBox="0 0 22 22"><rect x="4" y="5" width="14" height="12" rx="1.5" fill="none" stroke="#fff" stroke-width="1.2"/><path d="M4 8.5h14M4 12h14M9.5 8.5V17" stroke="#fff" stroke-width="1"/></svg>
<div style="position:absolute;left:61.00px;top:838.22px;font-family:'Liberation Sans', sans-serif;font-size:15.60px;line-height:15.60px;font-weight:400;color:#505966;letter-spacing:-0.142px;white-space:nowrap;">Methods</div>
<div style="position:absolute;left:31px;top:874px;width:22px;height:22px;background:#a9adb4;"></div>
<svg style="position:absolute;left:31px;top:874px;" width="22" height="22" viewBox="0 0 22 22"><rect x="4" y="5" width="14" height="12" rx="1.5" fill="none" stroke="#fff" stroke-width="1.2"/><path d="M4 8.5h14M4 12h14M9.5 8.5V17" stroke="#fff" stroke-width="1"/></svg>
<div style="position:absolute;left:61.00px;top:878.67px;font-family:'Liberation Sans', sans-serif;font-size:15.60px;line-height:15.60px;font-weight:400;color:#505966;letter-spacing:-0.325px;white-space:nowrap;">Equipment</div>
<div style="position:absolute;left:31px;top:915px;width:22px;height:22px;background:#a9adb4;"></div>
<svg style="position:absolute;left:31px;top:915px;" width="22" height="22" viewBox="0 0 22 22"><rect x="4" y="5" width="14" height="12" rx="1.5" fill="none" stroke="#fff" stroke-width="1.2"/><path d="M4 8.5h14M4 12h14M9.5 8.5V17" stroke="#fff" stroke-width="1"/></svg>
<div style="position:absolute;left:61.00px;top:919.12px;font-family:'Liberation Sans', sans-serif;font-size:15.60px;line-height:15.60px;font-weight:400;color:#505966;letter-spacing:-0.315px;white-space:nowrap;">Bioreactor Feeding Schedule</div>
</div>
<div style="position:absolute;left:1px;top:939px;width:329px;height:1px;background:#e3e4e6;"></div>
<div style="position:absolute;left:345px;top:139px;width:1573px;height:768px;background:#ffffff;border-left:1px solid #e8e9eb;border-top:1px solid #e8e9eb;box-sizing:border-box;"></div>
<div style="position:absolute;left:368px;top:168px;width:28px;height:27px;background:#a9adb4;"></div>
<svg style="position:absolute;left:368px;top:168px;" width="28" height="27" viewBox="0 0 28 27"><path d="M8 22.2L14 5.3M10 16.9h8.5M5.2 22.4h5.8M15.7 22.4h7.1" fill="none" stroke="#fff" stroke-width="1.4"/><path d="M14 5.3L20.5 22.2" stroke="#fff" stroke-width="2.1"/></svg>
<div style="position:absolute;left:404.00px;top:171.98px;font-family:'Liberation Sans', sans-serif;font-size:19.64px;line-height:19.64px;font-weight:400;color:#2d7be5;letter-spacing:0.040px;white-space:nowrap;-webkit-text-stroke:0.45px #2d7be5;">Add samples</div>
<div style="position:absolute;left:380.00px;top:227.77px;font-family:'Liberation Sans', sans-serif;font-size:15.28px;line-height:15.28px;font-weight:400;color:#24272b;letter-spacing:0.000px;white-space:nowrap;transform:scaleX(1.1521);transform-origin:0 0;">Add new samples from the "Add Content" button</div>
<div style="position:absolute;left:360px;top:347px;width:1545px;height:1px;background:#f7f8f9;"></div>
<div style="position:absolute;left:355px;top:358px;width:1553px;height:265px;background:#fff;border:2px solid #1d7a46;box-sizing:border-box;"></div>
<div style="position:absolute;left:368px;top:374px;width:28px;height:28px;background:#a9adb4;"></div>
<svg style="position:absolute;left:368px;top:374px;" width="28" height="28" viewBox="0 0 28 28"><g transform="scale(1.2727)"><path d="M6.8 4h6.2v2H6.8z" fill="#fff"/><path d="M8 6v3.8L3.6 17.6M11.8 6v3.8l1.2 2.2" fill="none" stroke="#fff" stroke-width="1.5"/><rect x="12.6" y="8.8" width="5.6" height="8.8" fill="none" stroke="#fff" stroke-width="1.4"/><path d="M4.8 13.6h13.4v4.2H3.4z" fill="#fff"/><path d="M9 11.2h2.2M9.4 9.4h1.4M14.2 11h2.4" stroke="#fff" stroke-width=".9"/></g></svg>
<div style="position:absolute;left:404.00px;top:379.01px;font-family:'Liberation Sans', sans-serif;font-size:18.89px;line-height:18.89px;font-weight:400;color:#2d7be5;letter-spacing:0.000px;white-space:nowrap;transform:scaleX(1.0194);transform-origin:0 0;-webkit-text-stroke:0.45px #2d7be5;">Samples Table</div>
<svg style="position:absolute;left:536px;top:378px;" width="11" height="18" viewBox="0 0 11 18"><path d="M2 1.5l7.5 7.5-7.5 7.5" fill="none" stroke="#6d7075" stroke-width="1.8"/></svg>
<div style="position:absolute;left:368.00px;top:413.64px;font-family:'Liberation Sans', sans-serif;font-size:14.60px;line-height:14.60px;font-weight:400;color:#5a5d62;letter-spacing:-0.256px;white-space:nowrap;">Row Count:</div>
<div style="position:absolute;left:447.00px;top:413.64px;font-family:'Liberation Sans', sans-serif;font-size:14.60px;line-height:14.60px;font-weight:700;color:#222;letter-spacing:0.000px;white-space:nowrap;">3</div>
<div style="position:absolute;left:460.00px;top:413.64px;font-family:'Liberation Sans', sans-serif;font-size:14.60px;line-height:14.60px;font-weight:400;color:#5a5d62;letter-spacing:-0.617px;white-space:nowrap;">of 1000</div>
<div style="position:absolute;left:381.00px;top:440.59px;font-family:'Liberation Sans', sans-serif;font-size:13.01px;line-height:13.01px;font-weight:400;color:#3b7fe0;letter-spacing:0.000px;white-space:nowrap;transform:scaleX(1.0311);transform-origin:0 0;-webkit-text-stroke:0.25px #3b7fe0;">Bulk Actions</div>
<svg style="position:absolute;left:458px;top:445px;" width="8" height="5" viewBox="0 0 8 5"><path d="M0 0h8L4 4.5z" fill="#3b7fe0"/></svg>
<svg style="position:absolute;left:1785px;top:377px;" width="20" height="20" viewBox="0 0 20 20"><path d="M10 1v11M5.5 8l4.5 4.5L14.5 8" fill="none" stroke="#b7babf" stroke-width="2"/><rect x="1" y="14.5" width="18" height="5" rx="2.5" fill="#b7babf"/><circle cx="16" cy="17" r="1" fill="#fff"/></svg>
<svg style="position:absolute;left:1814px;top:377px;" width="20" height="20" viewBox="0 0 20 20"><path d="M10 12.5V1.5M5.5 6L10 1.5 14.5 6" fill="none" stroke="#b7babf" stroke-width="2"/><rect x="1" y="14.5" width="18" height="5" rx="2.5" fill="#b7babf"/><circle cx="16" cy="17" r="1" fill="#fff"/></svg>
<svg style="position:absolute;left:1844px;top:377px;" width="20" height="20" viewBox="0 0 20 20"><rect x="1" y="2" width="9" height="15" rx="1.5" fill="#b7babf"/><rect x="3.5" y="0.5" width="4" height="3" rx="1" fill="#b7babf"/><rect x="8" y="6" width="11" height="14" rx="2" fill="#d3d5d9"/></svg>
<svg style="position:absolute;left:1873px;top:377px;" width="18" height="20" viewBox="0 0 18 20"><path d="M1 4h16M6.5 4V1.5h5V4" fill="none" stroke="#b7babf" stroke-width="1.6"/><path d="M2.5 5l1 14h11l1-14" fill="none" stroke="#b7babf" stroke-width="1.6"/><path d="M6.5 7.5v9M9 7.5v9M11.5 7.5v9" stroke="#b7babf" stroke-width="1.2"/></svg>
<svg style="position:absolute;left:1768px;top:439px;" width="14" height="15" viewBox="0 0 14 15"><rect x="1" y="1.5" width="12" height="12" rx="1" fill="none" stroke="#5b94e6" stroke-width="1.3"/><path d="M4 7.5l2.2 2.2L10.5 5" fill="none" stroke="#5b94e6" stroke-width="1.3"/></svg>
<div style="position:absolute;left:1785.00px;top:440.91px;font-family:'Liberation Sans', sans-serif;font-size:13.45px;line-height:13.45px;font-weight:400;color:#4a88e2;letter-spacing:-0.259px;white-space:nowrap;">View Selected (3)</div>
<div style="position:absolute;left:368px;top:461px;width:1527px;height:124px;overflow:hidden;">
<div style="position:absolute;left:190px;top:30px;width:141px;height:31px;background:#f5f6f8;"></div>
<div style="position:absolute;left:978px;top:30px;width:173px;height:31px;background:#f5f6f8;"></div>
<div style="position:absolute;left:1326px;top:30px;width:74px;height:31px;background:#f5f6f8;"></div>
<div style="position:absolute;left:190px;top:61px;width:141px;height:31px;background:#f5f6f8;"></div>
<div style="position:absolute;left:978px;top:61px;width:173px;height:31px;background:#f5f6f8;"></div>
<div style="position:absolute;left:1326px;top:61px;width:74px;height:31px;background:#f5f6f8;"></div>
<div style="position:absolute;left:190px;top:92px;width:141px;height:30px;background:#f5f6f8;"></div>
<div style="position:absolute;left:978px;top:92px;width:173px;height:30px;background:#f5f6f8;"></div>
<div style="position:absolute;left:1326px;top:92px;width:74px;height:30px;background:#f5f6f8;"></div>
<div style="position:absolute;left:0px;top:0px;width:1527px;height:1px;background:#dcdde1;"></div>
<div style="position:absolute;left:0px;top:30px;width:1527px;height:1px;background:#dcdde1;"></div>
<div style="position:absolute;left:0px;top:61px;width:1527px;height:1px;background:#dcdde1;"></div>
<div style="position:absolute;left:0px;top:92px;width:1527px;height:1px;background:#dcdde1;"></div>
<div style="position:absolute;left:0px;top:122px;width:1527px;height:1px;background:#dcdde1;"></div>
<div style="position:absolute;left:0px;top:0px;width:1px;height:123px;background:#dcdde1;"></div>
<div style="position:absolute;left:28px;top:0px;width:1px;height:123px;background:#dcdde1;"></div>
<div style="position:absolute;left:58px;top:0px;width:1px;height:123px;background:#dcdde1;"></div>
<div style="position:absolute;left:190px;top:0px;width:1px;height:123px;background:#dcdde1;"></div>
<div style="position:absolute;left:331px;top:0px;width:1px;height:123px;background:#dcdde1;"></div>
<div style="position:absolute;left:443px;top:0px;width:1px;height:123px;background:#dcdde1;"></div>
<div style="position:absolute;left:635px;top:0px;width:1px;height:123px;background:#dcdde1;"></div>
<div style="position:absolute;left:894px;top:0px;width:1px;height:123px;background:#dcdde1;"></div>
<div style="position:absolute;left:978px;top:0px;width:1px;height:123px;background:#dcdde1;"></div>
<div style="position:absolute;left:1151px;top:0px;width:1px;height:123px;background:#dcdde1;"></div>
<div style="position:absolute;left:1326px;top:0px;width:1px;height:123px;background:#dcdde1;"></div>
<div style="position:absolute;left:1400px;top:0px;width:1px;height:123px;background:#dcdde1;"></div>
<div style="position:absolute;left:1490px;top:0px;width:1px;height:123px;background:#dcdde1;"></div>
</div>
<div style="position:absolute;left:436.00px;top:470.45px;font-family:'Liberation Sans', sans-serif;font-size:15.30px;line-height:15.30px;font-weight:700;color:#111315;letter-spacing:-0.300px;white-space:nowrap;">ID</div>
<div style="position:absolute;left:570.00px;top:470.45px;font-family:'Liberation Sans', sans-serif;font-size:15.30px;line-height:15.30px;font-weight:700;color:#111315;letter-spacing:-0.007px;white-space:nowrap;">Template</div>
<div style="position:absolute;left:711.00px;top:470.45px;font-family:'Liberation Sans', sans-serif;font-size:15.30px;line-height:15.30px;font-weight:700;color:#111315;letter-spacing:-0.115px;white-space:nowrap;">Description</div>
<div style="position:absolute;left:823.00px;top:470.45px;font-family:'Liberation Sans', sans-serif;font-size:15.30px;line-height:15.30px;font-weight:700;color:#111315;letter-spacing:-0.012px;white-space:nowrap;">Material ID bioprocess</div>
<div style="position:absolute;left:1015.00px;top:470.45px;font-family:'Liberation Sans', sans-serif;font-size:15.30px;line-height:15.30px;font-weight:700;color:#111315;letter-spacing:-0.257px;white-space:nowrap;">Parent Reference</div>
<div style="position:absolute;left:1273.00px;top:470.45px;font-family:'Liberation Sans', sans-serif;font-size:15.30px;line-height:15.30px;font-weight:700;color:#111315;letter-spacing:0.000px;white-space:nowrap;transform:scaleX(1.0157);transform-origin:0 0;">Volume</div>
<div style="position:absolute;left:1356.00px;top:470.45px;font-family:'Liberation Sans', sans-serif;font-size:15.30px;line-height:15.30px;font-weight:700;color:#111315;letter-spacing:-0.036px;white-space:nowrap;">Created Date</div>
<div style="position:absolute;left:1531.00px;top:470.45px;font-family:'Liberation Sans', sans-serif;font-size:15.30px;line-height:15.30px;font-weight:700;color:#111315;letter-spacing:-0.210px;white-space:nowrap;">Required By</div>
<div style="position:absolute;left:1706.00px;top:470.45px;font-family:'Liberation Sans', sans-serif;font-size:15.30px;line-height:15.30px;font-weight:700;color:#111315;letter-spacing:-0.550px;white-space:nowrap;">Status</div>
<div style="position:absolute;left:1779.00px;top:470.45px;font-family:'Liberation Sans', sans-serif;font-size:15.30px;line-height:15.30px;font-weight:700;color:#111315;letter-spacing:-0.175px;white-space:nowrap;">Run Day</div>
<div style="position:absolute;left:1858px;top:461px;width:37px;height:31px;overflow:hidden;">
<div style="position:absolute;left:11.00px;top:9.45px;font-family:'Liberation Sans', sans-serif;font-size:15.30px;line-height:15.30px;font-weight:700;color:#111315;letter-spacing:-0.375px;white-space:nowrap;">Con</div>
</div>
<div style="position:absolute;left:374px;top:469px;width:14px;height:14px;background:#fff;border:1.8px solid #a2a4a8;border-radius:3.5px;box-sizing:border-box;"></div>
<svg style="position:absolute;left:403px;top:467px;" width="16" height="16" viewBox="0 0 16 16"><g fill="none" stroke="#c3c5c9" stroke-width="1.2" stroke-linejoin="round"><path d="M8.00,0.80 L10.70,3.32 L14.24,4.40 L13.40,8.00 L14.24,11.60 L10.70,12.68 L8.00,15.20 L5.30,12.68 L1.76,11.60 L2.60,8.00 L1.76,4.40 L5.30,3.32Z"/><circle cx="8" cy="8" r="2.2"/></g></svg>
<div style="position:absolute;left:374px;top:500px;width:14px;height:14px;background:#fff;border:1.8px solid #a2a4a8;border-radius:3.5px;box-sizing:border-box;"></div>
<svg style="position:absolute;left:404px;top:500px;" width="15" height="14" viewBox="0 0 15 14"><path d="M1 2.5h13M1 7h13M1 11.5h13" stroke="#c5c7cb" stroke-width="1.6"/></svg>
<svg style="position:absolute;left:431px;top:499px;" width="16" height="16" viewBox="0 0 16 16"><g transform="translate(-1.5,-3.3) scale(0.85,1.0)"><path d="M6.8 4h6.2v2H6.8z" fill="#c9a21f"/><path d="M8 6v3.8L3.6 17.6M11.8 6v3.8l1.2 2.2" fill="none" stroke="#c9a21f" stroke-width="1.5"/><rect x="12.6" y="8.8" width="5.6" height="8.8" fill="none" stroke="#c9a21f" stroke-width="1.4"/><path d="M4.8 13.6h13.4v4.2H3.4z" fill="#c9a21f"/><path d="M9 11.2h2.2M9.4 9.4h1.4M14.2 11h2.4" stroke="#c9a21f" stroke-width=".9"/></g></svg>
<div style="position:absolute;left:451.00px;top:501.59px;font-family:'Liberation Sans', sans-serif;font-size:14.90px;line-height:14.90px;font-weight:400;color:#c9a21f;letter-spacing:-0.039px;white-space:nowrap;">Sample-014</div>
<svg style="position:absolute;left:536px;top:499px;" width="16" height="17" viewBox="0 0 16 17"><circle cx="7.5" cy="8.8" r="6.7" fill="none" stroke="#c3c5c9" stroke-width="1.3"/><circle cx="7.6" cy="5.3" r="1" fill="#c3c5c9"/><path d="M6.3 7.6l1.8-.4v4.8M6.3 12.1h3.2" fill="none" stroke="#c3c5c9" stroke-width="1.4"/></svg>
<div style="position:absolute;left:566.00px;top:501.59px;font-family:'Liberation Sans', sans-serif;font-size:14.90px;line-height:14.90px;font-weight:400;color:#55585d;letter-spacing:-0.147px;white-space:nowrap;">Bioprocess Sample</div>
<svg style="position:absolute;left:819px;top:499px;" width="17" height="15" viewBox="0 0 17 15"><path d="M2.4 12.2L8.3 7.2L13.6 11.8M8.3 7.2V2" stroke="#3f2d80" stroke-width="1.3" fill="none"/><circle cx="8" cy="2" r="1.4" fill="#3f2d80"/><circle cx="8.3" cy="7.2" r="2.4" fill="#3f2d80"/><circle cx="12.1" cy="6" r="1.1" fill="#3f2d80"/><circle cx="2.4" cy="12.2" r="2.4" fill="#3f2d80"/><circle cx="13.6" cy="11.8" r="1.9" fill="#3f2d80"/></svg>
<div style="position:absolute;left:838.00px;top:501.59px;font-family:'Liberation Sans', sans-serif;font-size:14.90px;line-height:14.90px;font-weight:400;color:#4b3d8f;letter-spacing:-0.189px;white-space:nowrap;">CL-0009-01</div>
<svg style="position:absolute;left:922px;top:499px;" width="16" height="17" viewBox="0 0 16 17"><circle cx="7.5" cy="8.8" r="6.7" fill="none" stroke="#c3c5c9" stroke-width="1.3"/><circle cx="7.6" cy="5.3" r="1" fill="#c3c5c9"/><path d="M6.3 7.6l1.8-.4v4.8M6.3 12.1h3.2" fill="none" stroke="#c3c5c9" stroke-width="1.4"/></svg>
<svg style="position:absolute;left:941px;top:499px;" width="20" height="17" viewBox="0 0 20 17"><g fill="none" stroke="#c3c5c9" stroke-width="1.4"><path d="M7.8 6.2C6 5 3.5 5.5 2.5 7.5S2 12.5 4 13.8s4.5.6 5.8-1.2"/><path d="M9.5 4.2c1.5-1.8 4.2-2.3 6-1s2.2 4 .8 5.8l-3 2.8"/><path d="M1.5 1l17 14"/></g></svg>
<svg style="position:absolute;left:1014px;top:499px;" width="17" height="17" viewBox="0 0 17 17"><circle cx="7" cy="7" r="5.5" fill="none" stroke="#c6c8cc" stroke-width="1.3"/><path d="M11 11l4.5 4.5" stroke="#c6c8cc" stroke-width="1.4"/></svg>
<div style="position:absolute;left:1037px;top:498px;width:140px;height:19px;background:#d3f0f6;border-radius:4px;"></div>
<svg style="position:absolute;left:1042px;top:499px;" width="17" height="15" viewBox="0 0 17 15"><path d="M2.4 12.2L8.3 7.2L13.6 11.8M8.3 7.2V2" stroke="#3f2d80" stroke-width="1.3" fill="none"/><circle cx="8" cy="2" r="1.4" fill="#3f2d80"/><circle cx="8.3" cy="7.2" r="2.4" fill="#3f2d80"/><circle cx="12.1" cy="6" r="1.1" fill="#3f2d80"/><circle cx="2.4" cy="12.2" r="2.4" fill="#3f2d80"/><circle cx="13.6" cy="11.8" r="1.9" fill="#3f2d80"/></svg>
<div style="position:absolute;left:1061.00px;top:501.59px;font-family:'Liberation Sans', sans-serif;font-size:14.90px;line-height:14.90px;font-weight:400;color:#4b3d8f;letter-spacing:-0.443px;white-space:nowrap;">PLD-0001</div>
<svg style="position:absolute;left:1132px;top:499px;" width="16" height="17" viewBox="0 0 16 17"><circle cx="7.5" cy="8.8" r="6.7" fill="none" stroke="#b5c9cd" stroke-width="1.3"/><circle cx="7.6" cy="5.3" r="1" fill="#b5c9cd"/><path d="M6.3 7.6l1.8-.4v4.8M6.3 12.1h3.2" fill="none" stroke="#b5c9cd" stroke-width="1.4"/></svg>
<svg style="position:absolute;left:1151px;top:499px;" width="20" height="17" viewBox="0 0 20 17"><g fill="none" stroke="#b5c9cd" stroke-width="1.4"><path d="M7.8 6.2C6 5 3.5 5.5 2.5 7.5S2 12.5 4 13.8s4.5.6 5.8-1.2"/><path d="M9.5 4.2c1.5-1.8 4.2-2.3 6-1s2.2 4 .8 5.8l-3 2.8"/><path d="M1.5 1l17 14"/></g></svg>
<svg style="position:absolute;left:1233px;top:499px;" width="18" height="17" viewBox="0 0 18 17"><path d="M1.5 1.5l14 14M15.5 1.5l-14 14" stroke="#58595c" stroke-width="1.6"/></svg>
<div style="position:absolute;left:1353.00px;top:501.59px;font-family:'Liberation Sans', sans-serif;font-size:14.90px;line-height:14.90px;font-weight:400;color:#333539;letter-spacing:-0.081px;white-space:nowrap;">Nov 20, 2025, 12:31 PM</div>
<div style="position:absolute;left:1528.00px;top:499.99px;font-family:'Liberation Sans', sans-serif;font-size:14.90px;line-height:14.90px;font-weight:400;color:#55585d;letter-spacing:-0.224px;white-space:nowrap;">Dec 17, 2025, 12:00 PM</div>
<div style="position:absolute;left:1702.00px;top:501.79px;font-family:'Liberation Sans', sans-serif;font-size:14.90px;line-height:14.90px;font-weight:400;color:#388b58;letter-spacing:-0.120px;white-space:nowrap;">Active</div>
<div style="position:absolute;left:1776.00px;top:499.89px;font-family:'Liberation Sans', sans-serif;font-size:14.90px;line-height:14.90px;font-weight:400;color:#3b7fe0;letter-spacing:0.000px;white-space:nowrap;">2</div>
<div style="position:absolute;left:374px;top:530px;width:14px;height:14px;background:#fff;border:1.8px solid #a2a4a8;border-radius:3.5px;box-sizing:border-box;"></div>
<svg style="position:absolute;left:404px;top:530px;" width="15" height="14" viewBox="0 0 15 14"><path d="M1 2.5h13M1 7h13M1 11.5h13" stroke="#c5c7cb" stroke-width="1.6"/></svg>
<svg style="position:absolute;left:431px;top:530px;" width="16" height="16" viewBox="0 0 16 16"><g transform="translate(-1.5,-3.3) scale(0.85,1.0)"><path d="M6.8 4h6.2v2H6.8z" fill="#c9a21f"/><path d="M8 6v3.8L3.6 17.6M11.8 6v3.8l1.2 2.2" fill="none" stroke="#c9a21f" stroke-width="1.5"/><rect x="12.6" y="8.8" width="5.6" height="8.8" fill="none" stroke="#c9a21f" stroke-width="1.4"/><path d="M4.8 13.6h13.4v4.2H3.4z" fill="#c9a21f"/><path d="M9 11.2h2.2M9.4 9.4h1.4M14.2 11h2.4" stroke="#c9a21f" stroke-width=".9"/></g></svg>
<div style="position:absolute;left:451.00px;top:532.09px;font-family:'Liberation Sans', sans-serif;font-size:14.90px;line-height:14.90px;font-weight:400;color:#c9a21f;letter-spacing:-0.039px;white-space:nowrap;">Sample-015</div>
<svg style="position:absolute;left:536px;top:530px;" width="16" height="17" viewBox="0 0 16 17"><circle cx="7.5" cy="8.8" r="6.7" fill="none" stroke="#c3c5c9" stroke-width="1.3"/><circle cx="7.6" cy="5.3" r="1" fill="#c3c5c9"/><path d="M6.3 7.6l1.8-.4v4.8M6.3 12.1h3.2" fill="none" stroke="#c3c5c9" stroke-width="1.4"/></svg>
<div style="position:absolute;left:566.00px;top:532.09px;font-family:'Liberation Sans', sans-serif;font-size:14.90px;line-height:14.90px;font-weight:400;color:#55585d;letter-spacing:-0.147px;white-space:nowrap;">Bioprocess Sample</div>
<svg style="position:absolute;left:819px;top:530px;" width="17" height="15" viewBox="0 0 17 15"><path d="M2.4 12.2L8.3 7.2L13.6 11.8M8.3 7.2V2" stroke="#3f2d80" stroke-width="1.3" fill="none"/><circle cx="8" cy="2" r="1.4" fill="#3f2d80"/><circle cx="8.3" cy="7.2" r="2.4" fill="#3f2d80"/><circle cx="12.1" cy="6" r="1.1" fill="#3f2d80"/><circle cx="2.4" cy="12.2" r="2.4" fill="#3f2d80"/><circle cx="13.6" cy="11.8" r="1.9" fill="#3f2d80"/></svg>
<div style="position:absolute;left:838.00px;top:532.09px;font-family:'Liberation Sans', sans-serif;font-size:14.90px;line-height:14.90px;font-weight:400;color:#4b3d8f;letter-spacing:-0.189px;white-space:nowrap;">CL-0009-01</div>
<svg style="position:absolute;left:922px;top:530px;" width="16" height="17" viewBox="0 0 16 17"><circle cx="7.5" cy="8.8" r="6.7" fill="none" stroke="#c3c5c9" stroke-width="1.3"/><circle cx="7.6" cy="5.3" r="1" fill="#c3c5c9"/><path d="M6.3 7.6l1.8-.4v4.8M6.3 12.1h3.2" fill="none" stroke="#c3c5c9" stroke-width="1.4"/></svg>
<svg style="position:absolute;left:941px;top:530px;" width="20" height="17" viewBox="0 0 20 17"><g fill="none" stroke="#c3c5c9" stroke-width="1.4"><path d="M7.8 6.2C6 5 3.5 5.5 2.5 7.5S2 12.5 4 13.8s4.5.6 5.8-1.2"/><path d="M9.5 4.2c1.5-1.8 4.2-2.3 6-1s2.2 4 .8 5.8l-3 2.8"/><path d="M1.5 1l17 14"/></g></svg>
<svg style="position:absolute;left:1014px;top:530px;" width="17" height="17" viewBox="0 0 17 17"><circle cx="7" cy="7" r="5.5" fill="none" stroke="#c6c8cc" stroke-width="1.3"/><path d="M11 11l4.5 4.5" stroke="#c6c8cc" stroke-width="1.4"/></svg>
<div style="position:absolute;left:1037px;top:528px;width:140px;height:19px;background:#d3f0f6;border-radius:4px;"></div>
<svg style="position:absolute;left:1042px;top:530px;" width="17" height="15" viewBox="0 0 17 15"><path d="M2.4 12.2L8.3 7.2L13.6 11.8M8.3 7.2V2" stroke="#3f2d80" stroke-width="1.3" fill="none"/><circle cx="8" cy="2" r="1.4" fill="#3f2d80"/><circle cx="8.3" cy="7.2" r="2.4" fill="#3f2d80"/><circle cx="12.1" cy="6" r="1.1" fill="#3f2d80"/><circle cx="2.4" cy="12.2" r="2.4" fill="#3f2d80"/><circle cx="13.6" cy="11.8" r="1.9" fill="#3f2d80"/></svg>
<div style="position:absolute;left:1061.00px;top:532.09px;font-family:'Liberation Sans', sans-serif;font-size:14.90px;line-height:14.90px;font-weight:400;color:#4b3d8f;letter-spacing:-0.443px;white-space:nowrap;">PLD-0001</div>
<svg style="position:absolute;left:1132px;top:530px;" width="16" height="17" viewBox="0 0 16 17"><circle cx="7.5" cy="8.8" r="6.7" fill="none" stroke="#b5c9cd" stroke-width="1.3"/><circle cx="7.6" cy="5.3" r="1" fill="#b5c9cd"/><path d="M6.3 7.6l1.8-.4v4.8M6.3 12.1h3.2" fill="none" stroke="#b5c9cd" stroke-width="1.4"/></svg>
<svg style="position:absolute;left:1151px;top:530px;" width="20" height="17" viewBox="0 0 20 17"><g fill="none" stroke="#b5c9cd" stroke-width="1.4"><path d="M7.8 6.2C6 5 3.5 5.5 2.5 7.5S2 12.5 4 13.8s4.5.6 5.8-1.2"/><path d="M9.5 4.2c1.5-1.8 4.2-2.3 6-1s2.2 4 .8 5.8l-3 2.8"/><path d="M1.5 1l17 14"/></g></svg>
<svg style="position:absolute;left:1233px;top:530px;" width="18" height="17" viewBox="0 0 18 17"><path d="M1.5 1.5l14 14M15.5 1.5l-14 14" stroke="#58595c" stroke-width="1.6"/></svg>
<div style="position:absolute;left:1353.00px;top:532.09px;font-family:'Liberation Sans', sans-serif;font-size:14.90px;line-height:14.90px;font-weight:400;color:#333539;letter-spacing:-0.081px;white-space:nowrap;">Nov 20, 2025, 12:31 PM</div>
<div style="position:absolute;left:1528.00px;top:530.49px;font-family:'Liberation Sans', sans-serif;font-size:14.90px;line-height:14.90px;font-weight:400;color:#55585d;letter-spacing:-0.224px;white-space:nowrap;">Dec 17, 2025, 12:00 PM</div>
<div style="position:absolute;left:1702.00px;top:532.29px;font-family:'Liberation Sans', sans-serif;font-size:14.90px;line-height:14.90px;font-weight:400;color:#388b58;letter-spacing:-0.120px;white-space:nowrap;">Active</div>
<div style="position:absolute;left:1776.00px;top:530.39px;font-family:'Liberation Sans', sans-serif;font-size:14.90px;line-height:14.90px;font-weight:400;color:#3b7fe0;letter-spacing:0.000px;white-space:nowrap;">4</div>
<div style="position:absolute;left:374px;top:561px;width:14px;height:14px;background:#fff;border:1.8px solid #a2a4a8;border-radius:3.5px;box-sizing:border-box;"></div>
<svg style="position:absolute;left:404px;top:561px;" width="15" height="14" viewBox="0 0 15 14"><path d="M1 2.5h13M1 7h13M1 11.5h13" stroke="#c5c7cb" stroke-width="1.6"/></svg>
<svg style="position:absolute;left:431px;top:560px;" width="16" height="16" viewBox="0 0 16 16"><g transform="translate(-1.5,-3.3) scale(0.85,1.0)"><path d="M6.8 4h6.2v2H6.8z" fill="#c9a21f"/><path d="M8 6v3.8L3.6 17.6M11.8 6v3.8l1.2 2.2" fill="none" stroke="#c9a21f" stroke-width="1.5"/><rect x="12.6" y="8.8" width="5.6" height="8.8" fill="none" stroke="#c9a21f" stroke-width="1.4"/><path d="M4.8 13.6h13.4v4.2H3.4z" fill="#c9a21f"/><path d="M9 11.2h2.2M9.4 9.4h1.4M14.2 11h2.4" stroke="#c9a21f" stroke-width=".9"/></g></svg>
<div style="position:absolute;left:451.00px;top:562.59px;font-family:'Liberation Sans', sans-serif;font-size:14.90px;line-height:14.90px;font-weight:400;color:#c9a21f;letter-spacing:-0.039px;white-space:nowrap;">Sample-016</div>
<svg style="position:absolute;left:536px;top:560px;" width="16" height="17" viewBox="0 0 16 17"><circle cx="7.5" cy="8.8" r="6.7" fill="none" stroke="#c3c5c9" stroke-width="1.3"/><circle cx="7.6" cy="5.3" r="1" fill="#c3c5c9"/><path d="M6.3 7.6l1.8-.4v4.8M6.3 12.1h3.2" fill="none" stroke="#c3c5c9" stroke-width="1.4"/></svg>
<div style="position:absolute;left:566.00px;top:562.59px;font-family:'Liberation Sans', sans-serif;font-size:14.90px;line-height:14.90px;font-weight:400;color:#55585d;letter-spacing:-0.147px;white-space:nowrap;">Bioprocess Sample</div>
<svg style="position:absolute;left:819px;top:560px;" width="17" height="15" viewBox="0 0 17 15"><path d="M2.4 12.2L8.3 7.2L13.6 11.8M8.3 7.2V2" stroke="#3f2d80" stroke-width="1.3" fill="none"/><circle cx="8" cy="2" r="1.4" fill="#3f2d80"/><circle cx="8.3" cy="7.2" r="2.4" fill="#3f2d80"/><circle cx="12.1" cy="6" r="1.1" fill="#3f2d80"/><circle cx="2.4" cy="12.2" r="2.4" fill="#3f2d80"/><circle cx="13.6" cy="11.8" r="1.9" fill="#3f2d80"/></svg>
<div style="position:absolute;left:838.00px;top:562.59px;font-family:'Liberation Sans', sans-serif;font-size:14.90px;line-height:14.90px;font-weight:400;color:#4b3d8f;letter-spacing:-0.189px;white-space:nowrap;">CL-0009-01</div>
<svg style="position:absolute;left:922px;top:560px;" width="16" height="17" viewBox="0 0 16 17"><circle cx="7.5" cy="8.8" r="6.7" fill="none" stroke="#c3c5c9" stroke-width="1.3"/><circle cx="7.6" cy="5.3" r="1" fill="#c3c5c9"/><path d="M6.3 7.6l1.8-.4v4.8M6.3 12.1h3.2" fill="none" stroke="#c3c5c9" stroke-width="1.4"/></svg>
<svg style="position:absolute;left:941px;top:560px;" width="20" height="17" viewBox="0 0 20 17"><g fill="none" stroke="#c3c5c9" stroke-width="1.4"><path d="M7.8 6.2C6 5 3.5 5.5 2.5 7.5S2 12.5 4 13.8s4.5.6 5.8-1.2"/><path d="M9.5 4.2c1.5-1.8 4.2-2.3 6-1s2.2 4 .8 5.8l-3 2.8"/><path d="M1.5 1l17 14"/></g></svg>
<svg style="position:absolute;left:1014px;top:560px;" width="17" height="17" viewBox="0 0 17 17"><circle cx="7" cy="7" r="5.5" fill="none" stroke="#c6c8cc" stroke-width="1.3"/><path d="M11 11l4.5 4.5" stroke="#c6c8cc" stroke-width="1.4"/></svg>
<div style="position:absolute;left:1037px;top:558px;width:140px;height:19px;background:#d3f0f6;border-radius:4px;"></div>
<svg style="position:absolute;left:1042px;top:560px;" width="17" height="15" viewBox="0 0 17 15"><path d="M2.4 12.2L8.3 7.2L13.6 11.8M8.3 7.2V2" stroke="#3f2d80" stroke-width="1.3" fill="none"/><circle cx="8" cy="2" r="1.4" fill="#3f2d80"/><circle cx="8.3" cy="7.2" r="2.4" fill="#3f2d80"/><circle cx="12.1" cy="6" r="1.1" fill="#3f2d80"/><circle cx="2.4" cy="12.2" r="2.4" fill="#3f2d80"/><circle cx="13.6" cy="11.8" r="1.9" fill="#3f2d80"/></svg>
<div style="position:absolute;left:1061.00px;top:562.59px;font-family:'Liberation Sans', sans-serif;font-size:14.90px;line-height:14.90px;font-weight:400;color:#4b3d8f;letter-spacing:-0.443px;white-space:nowrap;">PLD-0001</div>
<svg style="position:absolute;left:1132px;top:560px;" width="16" height="17" viewBox="0 0 16 17"><circle cx="7.5" cy="8.8" r="6.7" fill="none" stroke="#b5c9cd" stroke-width="1.3"/><circle cx="7.6" cy="5.3" r="1" fill="#b5c9cd"/><path d="M6.3 7.6l1.8-.4v4.8M6.3 12.1h3.2" fill="none" stroke="#b5c9cd" stroke-width="1.4"/></svg>
<svg style="position:absolute;left:1151px;top:560px;" width="20" height="17" viewBox="0 0 20 17"><g fill="none" stroke="#b5c9cd" stroke-width="1.4"><path d="M7.8 6.2C6 5 3.5 5.5 2.5 7.5S2 12.5 4 13.8s4.5.6 5.8-1.2"/><path d="M9.5 4.2c1.5-1.8 4.2-2.3 6-1s2.2 4 .8 5.8l-3 2.8"/><path d="M1.5 1l17 14"/></g></svg>
<svg style="position:absolute;left:1233px;top:560px;" width="18" height="17" viewBox="0 0 18 17"><path d="M1.5 1.5l14 14M15.5 1.5l-14 14" stroke="#58595c" stroke-width="1.6"/></svg>
<div style="position:absolute;left:1353.00px;top:562.59px;font-family:'Liberation Sans', sans-serif;font-size:14.90px;line-height:14.90px;font-weight:400;color:#333539;letter-spacing:-0.081px;white-space:nowrap;">Nov 20, 2025, 12:31 PM</div>
<div style="position:absolute;left:1528.00px;top:560.99px;font-family:'Liberation Sans', sans-serif;font-size:14.90px;line-height:14.90px;font-weight:400;color:#55585d;letter-spacing:-0.224px;white-space:nowrap;">Dec 17, 2025, 12:00 PM</div>
<div style="position:absolute;left:1702.00px;top:562.79px;font-family:'Liberation Sans', sans-serif;font-size:14.90px;line-height:14.90px;font-weight:400;color:#388b58;letter-spacing:-0.120px;white-space:nowrap;">Active</div>
<div style="position:absolute;left:1776.00px;top:560.89px;font-family:'Liberation Sans', sans-serif;font-size:14.90px;line-height:14.90px;font-weight:400;color:#3b7fe0;letter-spacing:0.000px;white-space:nowrap;">6</div>
<div style="position:absolute;left:1621px;top:600px;width:274px;height:14px;background:#fafafa;"></div>
<svg style="position:absolute;left:372px;top:602px;" width="7" height="10" viewBox="0 0 7 10"><path d="M7 0v10L0 5z" fill="#8a8a8a"/></svg>
<div style="position:absolute;left:386px;top:603px;width:1235px;height:9px;background:#8c8c8c;border-radius:5px;"></div>
<svg style="position:absolute;left:1883px;top:602px;" width="7" height="10" viewBox="0 0 7 10"><path d="M0 0v10l7-5z" fill="#8a8a8a"/></svg>
<div style="position:absolute;left:345px;top:907px;width:1573px;height:33px;background:#f6f7f9;"></div>
<div style="position:absolute;left:345px;top:906px;width:1573px;height:1px;background:#c9cacd;"></div>
<svg style="position:absolute;left:345px;top:906.5px;overflow:visible;" width="920" height="33" viewBox="0 0 920 33"><path d="M5.50,0.50 L179.00,0.50 Q182.50,0.50 184.09,3.62 L195.96,26.99 Q198.00,31.00 193.50,31.00 L30.50,31.00 Q26.00,31.00 23.22,27.46 L4.16,3.25 Q2.00,0.50 5.50,0.50Z" fill="#e7e8ec" stroke="#c9cace" stroke-width="1"/><path d="M186.00,0.50 L269.00,0.50 Q272.50,0.50 273.92,3.70 L284.18,26.89 Q286.00,31.00 281.50,31.00 L202.50,31.00 Q198.00,31.00 195.96,26.99 L184.09,3.62 Q182.50,0.50 186.00,0.50Z" fill="#e7e8ec" stroke="#c9cace" stroke-width="1"/><path d="M796.00,0.50 L891.50,0.50 Q895.00,0.50 893.67,3.74 L884.21,26.84 Q882.50,31.00 878.00,31.00 L783.25,31.00 Q778.75,31.00 780.60,26.90 L791.06,3.69 Q792.50,0.50 796.00,0.50Z" fill="#e7e8ec" stroke="#c9cace" stroke-width="1"/><path d="M695.50,0.50 L789.00,0.50 Q792.50,0.50 791.06,3.69 L780.60,26.90 Q778.75,31.00 774.25,31.00 L682.50,31.00 Q678.00,31.00 679.88,26.91 L690.54,3.68 Q692.00,0.50 695.50,0.50Z" fill="#e7e8ec" stroke="#c9cace" stroke-width="1"/><path d="M591.50,0.50 L688.50,0.50 Q692.00,0.50 690.54,3.68 L679.88,26.91 Q678.00,31.00 673.50,31.00 L577.50,31.00 Q573.00,31.00 574.99,26.96 L586.46,3.64 Q588.00,0.50 591.50,0.50Z" fill="#e7e8ec" stroke="#c9cace" stroke-width="1"/><path d="M474.50,0.50 L584.50,0.50 Q588.00,0.50 586.46,3.64 L574.99,26.96 Q573.00,31.00 568.50,31.00 L460.50,31.00 Q456.00,31.00 457.99,26.96 L469.46,3.64 Q471.00,0.50 474.50,0.50Z" fill="#e7e8ec" stroke="#c9cace" stroke-width="1"/><path d="M387.50,0.50 L467.50,0.50 Q471.00,0.50 469.46,3.64 L457.99,26.96 Q456.00,31.00 451.50,31.00 L374.50,31.00 Q370.00,31.00 371.88,26.91 L382.54,3.68 Q384.00,0.50 387.50,0.50Z" fill="#e7e8ec" stroke="#c9cace" stroke-width="1"/><path d="M276.00,0.50 L381.50,0.50 Q385.00,0.50 383.37,3.60 L371.09,27.02 Q369.00,31.00 364.50,31.00 L290.50,31.00 Q286.00,31.00 284.18,26.89 L273.92,3.70 Q272.50,0.50 276.00,0.50Z" fill="#ffffff" stroke="#d0d1d4" stroke-width="1"/></svg>
<div style="position:absolute;left:345px;top:906px;width:1573px;height:1px;background:#c4c5c8;"></div>
<div style="position:absolute;left:618px;top:906px;width:112px;height:1px;background:#e6e7e9;"></div>
<div style="position:absolute;left:378.00px;top:916.56px;font-family:'Liberation Sans', sans-serif;font-size:14.70px;line-height:14.70px;font-weight:400;color:#6b6e73;letter-spacing:0.000px;white-space:nowrap;transform:scaleX(1.0537);transform-origin:0 0;">Video Tutorial Content</div>
<div style="position:absolute;left:557.00px;top:916.56px;font-family:'Liberation Sans', sans-serif;font-size:14.70px;line-height:14.70px;font-weight:400;color:#6b6e73;letter-spacing:0.093px;white-space:nowrap;">Overview</div>
<div style="position:absolute;left:726.60px;top:916.56px;font-family:'Liberation Sans', sans-serif;font-size:14.70px;line-height:14.70px;font-weight:400;color:#6b6e73;letter-spacing:-0.519px;white-space:nowrap;">Task Plan</div>
<div style="position:absolute;left:812.40px;top:916.56px;font-family:'Liberation Sans', sans-serif;font-size:14.70px;line-height:14.70px;font-weight:400;color:#6b6e73;letter-spacing:-0.013px;white-space:nowrap;">CLD Materials</div>
<div style="position:absolute;left:930.20px;top:916.56px;font-family:'Liberation Sans', sans-serif;font-size:14.70px;line-height:14.70px;font-weight:400;color:#6b6e73;letter-spacing:-0.173px;white-space:nowrap;">CLD Analysis</div>
<div style="position:absolute;left:1041.00px;top:916.56px;font-family:'Liberation Sans', sans-serif;font-size:14.70px;line-height:14.70px;font-weight:400;color:#6b6e73;letter-spacing:0.000px;white-space:nowrap;transform:scaleX(1.0261);transform-origin:0 0;">Bioreactor</div>
<div style="position:absolute;left:1135.00px;top:916.56px;font-family:'Liberation Sans', sans-serif;font-size:14.70px;line-height:14.70px;font-weight:400;color:#6b6e73;letter-spacing:0.072px;white-space:nowrap;">Worksheets</div>
<div style="position:absolute;left:644.00px;top:916.56px;font-family:'Liberation Sans', sans-serif;font-size:14.70px;line-height:14.70px;font-weight:400;color:#6b6e73;letter-spacing:-0.200px;white-space:nowrap;">Samples</div>
<div style="position:absolute;left:1240.60px;top:918.02px;font-family:'Liberation Sans', sans-serif;font-size:11.20px;line-height:11.20px;font-weight:400;color:#333;letter-spacing:0.000px;white-space:nowrap;">+</div>
<svg style="position:absolute;left:480px;top:489px;" width="18" height="23" viewBox="0 0 18 23"><path d="M5 2.5Q7 0 9 2.5L9 6.5L14.5 7Q16.5 7.5 16.5 9.5L16.5 15L14.5 21.5L6 21.5L1 14.5L1.5 12Q3 11 5 13Z" fill="#1fe0ea" stroke="#0f6f74" stroke-width="0.8"/><path d="M5 13V3" stroke="#2a4f55" stroke-width="1.2"/><rect x="10" y="8" width="2" height="3" fill="#138a90"/></svg></body></html>
